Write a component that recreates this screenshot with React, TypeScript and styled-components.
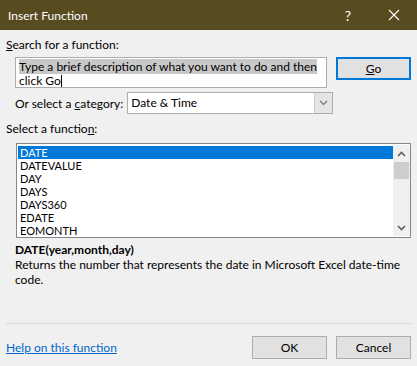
import React from 'react';
import styled, { createGlobalStyle } from 'styled-components';

const GlobalStyle = createGlobalStyle`
  html, body {
    margin: 0;
    padding: 0;
    background: #f0f0f0;
  }
  body {
    font-family: Lato, 'Liberation Sans', sans-serif;
    font-size: 12px;
    color: #000;
  }
`;

const functions = ['DATE', 'DATEVALUE', 'DAY', 'DAYS', 'DAYS360', 'EDATE', 'EOMONTH'];

const Chevron: React.FC<{ up?: boolean; thin?: boolean }> = ({ up, thin }) => (
  <svg width='9' height='6' viewBox='0 0 9 6'>
    <path
      d={up ? 'M1 5 L4.5 1.5 L8 5' : 'M1 1 L4.5 4.5 L8 1'}
      fill='none'
      stroke={thin ? '#707070' : '#606060'}
      strokeWidth={thin ? 1.1 : 1.7}
    />
  </svg>
);

const App: React.FC = () => {
  return (
    <Dialog>
      <GlobalStyle />
      <TitleBar>
        <Title>Insert Function</Title>
        <CaptionButton>?</CaptionButton>
        <CaptionButton>
          <svg width='12' height='12' viewBox='0 0 12 12'>
            <path d='M1 1 L11 11 M11 1 L1 11' stroke='#fff' strokeWidth='1.1' />
          </svg>
        </CaptionButton>
      </TitleBar>
      <Body>
        <Label>
          <u>S</u>earch for a function:
        </Label>
        <SearchRow>
          <SearchBox>
            <Selected>Type a brief description of what you want to do and then</Selected>
            <br />
            click Go
            <Caret />
          </SearchBox>
          <Button $primary>
            <u>G</u>o
          </Button>
        </SearchRow>
        <CategoryRow>
          <span>
            Or select a <u>c</u>ategory:
          </span>
          <Select>
            <SelectValue>Date &amp; Time</SelectValue>
            <DropButton>
              <Chevron thin />
            </DropButton>
          </Select>
        </CategoryRow>
        <Label $gap={7}>
          Select a functio<u>n</u>:
        </Label>
        <ListBox>
          <Items>
            {functions.map((f, i) => (
              <Item key={f} $active={i === 0}>
                {f}
              </Item>
            ))}
          </Items>
          <ScrollBar>
            <ScrollArrow>
              <Chevron up />
            </ScrollArrow>
            <Thumb />
            <Track />
            <ScrollArrow>
              <Chevron />
            </ScrollArrow>
          </ScrollBar>
        </ListBox>
        <Syntax>DATE(year,month,day)</Syntax>
        <Description>
          Returns the number that represents the date in Microsoft Excel date&#8209;time code.
        </Description>
        <Spacer />
        <Separator />
        <Footer>
          <HelpLink href='#'>Help on this function</HelpLink>
          <Buttons>
            <Button>OK</Button>
            <Button>Cancel</Button>
          </Buttons>
        </Footer>
      </Body>
    </Dialog>
  );
};

export default App;

const Dialog = styled.div`
  width: 417px;
  height: 366px;
  background: #f0f0f0;
  display: flex;
  flex-direction: column;
  overflow: hidden;
`;

const TitleBar = styled.div`
  height: 30px;
  flex: none;
  background: #574b20;
  color: #fff;
  display: flex;
  align-items: center;
  padding-left: 8px;
`;

const Title = styled.div`
  flex: 1;
  font-size: 12px;
`;

const CaptionButton = styled.div`
  width: 46px;
  height: 30px;
  display: flex;
  align-items: center;
  justify-content: center;
  font-size: 14px;
`;

const Body = styled.div`
  flex: 1;
  display: flex;
  flex-direction: column;
  padding: 7px 6px 7px 6px;
`;

const Label = styled.div<{ $gap?: number }>`
  height: 16px;
  line-height: 16px;
  margin-top: ${(p) => p.$gap ?? 0}px;
`;

const SearchRow = styled.div`
  display: flex;
  align-items: flex-start;
  gap: 9px;
  margin-top: 4px;
  padding-left: 9px;
`;

const SearchBox = styled.div`
  width: 312px;
  height: 31px;
  box-sizing: border-box;
  background: #fff;
  border: 1px solid #adadad;
  padding: 2px 3px 0;
  line-height: 14px;
  overflow: hidden;
`;

const Selected = styled.span`
  background: #c8c8c8;
`;

const Caret = styled.span`
  display: inline-block;
  width: 1px;
  height: 12px;
  background: #000;
  vertical-align: -2px;
`;

const Button = styled.button<{ $primary?: boolean }>`
  width: 75px;
  height: 23px;
  box-sizing: border-box;
  background: #e1e1e1;
  border: ${(p) => (p.$primary ? '2px solid #0078d7' : '1px solid #adadad')};
  font: inherit;
  color: #000;
  padding: 0;
`;

const CategoryRow = styled.div`
  display: flex;
  align-items: center;
  gap: 4px;
  margin-top: 4px;
  padding-left: 9px;
`;

const Select = styled.div`
  width: 206px;
  height: 22px;
  box-sizing: border-box;
  background: #fff;
  border: 1px solid #adadad;
  display: flex;
`;

const SelectValue = styled.div`
  flex: 1;
  padding-left: 3px;
  line-height: 20px;
`;

const DropButton = styled.div`
  width: 17px;
  background: #e5e5e5;
  border-left: 1px solid #cccccc;
  display: flex;
  align-items: center;
  justify-content: center;
`;

const ListBox = styled.div`
  margin: 6px 0 0 10px;
  width: 395px;
  height: 95px;
  box-sizing: border-box;
  border: 1px solid #828790;
  background: #fff;
  display: flex;
  padding: 1px 0 1px 1px;
`;

const Items = styled.div`
  flex: 1;
  padding-top: 1px;
  font-size: 11px;
`;

const Item = styled.div<{ $active?: boolean }>`
  height: 13px;
  line-height: 13px;
  padding-left: 2px;
  background: ${(p) => (p.$active ? '#0078d7' : 'transparent')};
  color: ${(p) => (p.$active ? '#fff' : '#000')};
`;

const ScrollBar = styled.div`
  width: 17px;
  background: #f0f0f0;
  display: flex;
  flex-direction: column;
`;

const ScrollArrow = styled.div`
  height: 17px;
  display: flex;
  align-items: center;
  justify-content: center;
`;

const Thumb = styled.div`
  height: 17px;
  margin: 0 1px;
  background: #cdcdcd;
`;

const Track = styled.div`
  flex: 1;
`;

const Syntax = styled.div`
  font-weight: bold;
  margin: 4px 0 0 9px;
  line-height: 15px;
`;

const Description = styled.div`
  margin: 0 0 0 9px;
  line-height: 15px;
`;

const Spacer = styled.div`
  flex: 1;
`;

const Separator = styled.div`
  height: 1px;
  background: #d7d7d7;
`;

const Footer = styled.div`
  display: flex;
  align-items: center;
  justify-content: space-between;
  margin-top: 12px;
`;

const HelpLink = styled.a`
  color: #0066cc;
  text-decoration: underline;
`;

const Buttons = styled.div`
  display: flex;
  gap: 9px;
`;
